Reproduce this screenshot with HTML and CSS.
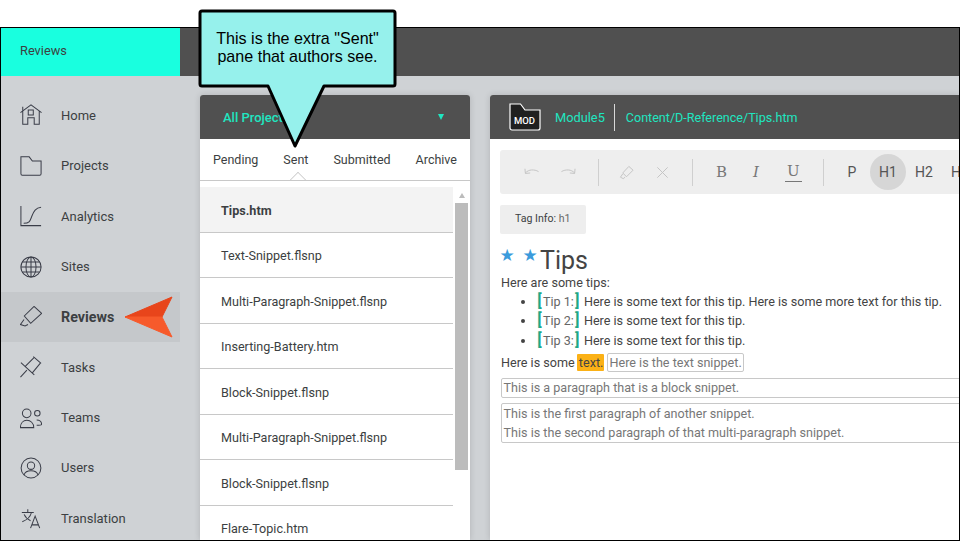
FILE: index.html
```html
<!doctype html>
<html lang="en">

<head>
    <meta charset="utf-8">
    <meta name="viewport" content="width=device-width, initial-scale=1">
    <title>Reviews</title>
    <link rel="stylesheet" href="styles.css">
</head>

<body>
<div class="frame">
    <header class="topbar">
        <div class="topbar-title">Reviews</div>
    </header>

    <div class="workspace">
        <nav class="sidenav">
            <a class="nav-item">
                <svg class="nav-icon" viewBox="0 0 24 24"><path d="M.5 9.500 12 1l11.500 8.500M3 3v4M3 7.500V22h5.500v-7h7v7H21V7.500M9 6.500h5.500V12H9z"/></svg>
                Home
            </a>
            <a class="nav-item">
                <svg class="nav-icon" viewBox="0 0 24 24"><path d="M1 2h9l3.500 4.500H23v14a1.500 1.500 0 0 1-1.500 1.500h-19A1.500 1.500 0 0 1 1 20.500z"/></svg>
                Projects
            </a>
            <a class="nav-item">
                <svg class="nav-icon" viewBox="0 0 24 24"><path d="M1 1v21.500h22M4 20c7 0 7-3 9-8s4-9 10-9.500"/></svg>
                Analytics
            </a>
            <a class="nav-item">
                <svg class="nav-icon" viewBox="0 0 24 24"><circle cx="12" cy="12" r="11"/><ellipse cx="12" cy="12" rx="5.500" ry="11"/><path d="M12 1v22M1 12h22M2.500 6.500h19M2.500 17.500h19"/></svg>
                Sites
            </a>
            <a class="nav-item nav-item-active">
                <svg class="nav-icon" viewBox="0 0 24 24"><path d="M15.300.5 23.600 8 11.700 18.900 4.700 10.900zM4.400 14.700.5 20.200l5 1.600 3.200-1.600"/></svg>
                Reviews
            </a>
            <a class="nav-item">
                <svg class="nav-icon" viewBox="0 0 24 24"><path d="M14.500.8 23 8M1 7.300 15.600 20.700M6 11l9-9M13 19l9-11M.5 23l7-7.500"/></svg>
                Tasks
            </a>
            <a class="nav-item">
                <svg class="nav-icon" viewBox="0 0 24 24"><circle cx="7.300" cy="6.900" r="4.700"/><path d="M.5 22.500c0-5 3-8 7-8s7.500 3 7.500 8z"/><circle cx="18.900" cy="6.900" r="3"/><path d="M18.200 14.200c3 0 5.400 2 5.400 4.700 0 1-1.500 1.100-5.400 1.100"/></svg>
                Teams
            </a>
            <a class="nav-item">
                <svg class="nav-icon" viewBox="0 0 24 24"><circle cx="12" cy="12" r="10.800"/><circle cx="12" cy="9.500" r="4"/><path d="M4.500 19.500c1-3.500 4-4.500 7.500-4.500s6.500 1 7.500 4.500"/></svg>
                Users
            </a>
            <a class="nav-item">
                <svg class="nav-icon" viewBox="0 0 24 24"><path d="M2 6h13M8.500 2.500V6M12.500 6c-1 4-4.500 8-10 10M4.500 8c1.500 3.500 4 5.500 7 7M11.500 23l5-13 5 13M13 19.500h7"/></svg>
                Translation
            </a>
        </nav>

        <section class="list-panel">
            <div class="panel-bar project-select">
                <span>All Projects</span>
                <span class="select-arrow"></span>
            </div>
            <div class="tabs">
                <span>Pending</span>
                <span class="tab-active">Sent</span>
                <span>Submitted</span>
                <span>Archive</span>
            </div>
            <div class="file-list">
                <ul class="files">
                    <li class="file-selected">Tips.htm</li>
                    <li>Text-Snippet.flsnp</li>
                    <li>Multi-Paragraph-Snippet.flsnp</li>
                    <li>Inserting-Battery.htm</li>
                    <li>Block-Snippet.flsnp</li>
                    <li>Multi-Paragraph-Snippet.flsnp</li>
                    <li>Block-Snippet.flsnp</li>
                    <li>Flare-Topic.htm</li>
                </ul>
                <div class="scrollbar">
                    <span class="scroll-up"></span>
                    <span class="scroll-thumb"></span>
                </div>
            </div>
        </section>

        <section class="editor-panel">
            <div class="panel-bar editor-bar">
                <svg class="mod-icon" viewBox="0 0 32 28"><path d="M1 1h10.500l4.500 6h15v18a2 2 0 0 1-2 2H3a2 2 0 0 1-2-2z"/></svg>
                <span class="mod-label">MOD</span>
                <span class="module-name">Module5</span>
                <span class="file-path">Content/D-Reference/Tips.htm</span>
            </div>

            <div class="toolbar">
                <div class="tool-group tool-group-off">
                    <svg class="tool-icon" viewBox="0 0 16 16"><path d="M1 4l.5 5 5-.5M1.500 8.500C5 4.500 11 4.500 15.500 7"/></svg>
                    <svg class="tool-icon" viewBox="0 0 16 16"><path d="M15 4l-.5 5-5-.5M14.500 8.500C11 4.500 5 4.500.5 7"/></svg>
                </div>
                <div class="tool-group tool-group-off">
                    <svg class="tool-icon" viewBox="0 0 16 16"><path d="m10.500 1.500 4.500 4-7 7L4 8.500zM4 9.500l-2.500 3.500 3 1.500 2-1.500"/></svg>
                    <svg class="tool-icon" viewBox="0 0 16 16"><path d="m2.500 2.500 11 11M13.500 2.500l-11 11"/></svg>
                </div>
                <div class="tool-group tool-group-format">
                    <span class="format-b">B</span>
                    <span class="format-i">I</span>
                    <span class="format-u">U</span>
                </div>
                <div class="tool-group tool-group-tags">
                    <span class="tag-btn">P</span>
                    <span class="tag-btn tag-btn-active">H1</span>
                    <span class="tag-btn">H2</span>
                    <span class="tag-btn">H3</span>
                </div>
            </div>

            <div class="tag-info">Tag Info: <span class="tag-name">h1</span></div>

            <article class="doc">
                <h1><span class="star">★</span><span class="star">★</span>Tips</h1>
                <p>Here are some tips:</p>
                <ul>
                    <li><span class="bracket">[</span><span class="tip-label">Tip 1:</span><span class="bracket">]</span> Here is some text for this tip. Here is some more text for this tip.</li>
                    <li><span class="bracket">[</span><span class="tip-label">Tip 2:</span><span class="bracket">]</span> Here is some text for this tip.</li>
                    <li><span class="bracket">[</span><span class="tip-label">Tip 3:</span><span class="bracket">]</span> Here is some text for this tip.</li>
                </ul>
                <p class="doc-inline">Here is some <mark>text.</mark> <span class="snippet-inline">Here is the text snippet.</span></p>
                <div class="snippet-block">This is a paragraph that is a block snippet.</div>
                <div class="snippet-block snippet-multi">
                    <p>This is the first paragraph of another snippet.</p>
                    <p>This is the second paragraph of that multi-paragraph snippet.</p>
                </div>
            </article>
        </section>
    </div>

    <svg class="arrow" viewBox="0 0 50 42">
        <path d="M1 21 48 1 38 21z" fill="#e8451b" stroke="#e8451b" stroke-linejoin="round"/>
        <path d="M1 21h37l10 20z" fill="#f75a2b" stroke="#f75a2b" stroke-linejoin="round"/>
    </svg>
</div>

<div class="callout">
    <svg class="callout-shape" viewBox="0 0 200 140">
        <path d="M4 2h191a2 2 0 0 1 2 2v71a2 2 0 0 1-2 2h-69l-29 60-27-60H4a2 2 0 0 1-2-2V4a2 2 0 0 1 2-2z"/>
    </svg>
    <p class="callout-text">This is the extra "Sent"<br>pane that authors see.</p>
</div>
</body>
</html>
```

FILE: styles.css
```css
:root {
    /* Colors */
    --color-teal: #19ffdf;
    --color-bar: #505050;
    --color-side: #cfd2d5;
    --color-text: #3c3f42;
    --color-line: #c8c8c8;
    --color-tool: #eeeeee;
    --color-green: #1fe6c0;

    --font-stack: Roboto, "Liberation Sans", sans-serif;
}

*, *::before, *::after {
    box-sizing: border-box;
}

html, body {
    height: 541px;
    overflow: hidden;
}

body {
    margin: 0;
    padding-top: 27px;
    background: #fff;
    font-family: var(--font-stack);
    font-size: 13px;
    color: var(--color-text);
}

.frame {
    position: relative;
    height: 514px;
    border: 1px solid #000;
    overflow: hidden;
    display: flex;
    flex-direction: column;
}

.topbar {
    flex: none;
    height: 48px;
    background: var(--color-bar);
}

.topbar-title {
    width: 179px;
    height: 100%;
    padding-left: 19px;
    line-height: 46px;
    font-size: 12.800px;
    background: var(--color-teal);
}

.workspace {
    flex: 1;
    display: flex;
    min-height: 0;
    background: var(--color-side);
}

/* Left navigation */
.sidenav {
    flex: none;
    width: 199px;
    padding-top: 14.300px;
}

.nav-item {
    width: 179px;
    height: 50.350px;
    display: flex;
    align-items: center;
    gap: 19px;
    padding-left: 19px;
}

.nav-item-active {
    font-weight: 700;
    font-size: 14.300px;
    background: #c5c8cb;
}

.nav-icon {
    flex: none;
    width: 22px;
    height: 22px;
    fill: none;
    stroke: #3a3d48;
    stroke-width: 1.100;
}

/* Middle panel */
.list-panel {
    flex: none;
    width: 270px;
    margin-top: 19px;
    background: #fff;
    border-radius: 3px 3px 0 0;
    box-shadow: 0 0 6px rgb(0 0 0 / 0.15);
    display: flex;
    flex-direction: column;
}

.panel-bar {
    flex: none;
    height: 44px;
    display: flex;
    align-items: center;
    background: var(--color-bar);
    border-radius: 3px 3px 0 0;
    color: var(--color-green);
}

.project-select {
    justify-content: space-between;
    padding: 0 26px 0 23px;
    font-weight: 500;
}

.select-arrow {
    width: 0;
    height: 0;
    border-left: 3.500px solid transparent;
    border-right: 3.500px solid transparent;
    border-top: 6px solid var(--color-green);
}

.tabs {
    flex: none;
    position: relative;
    height: 42px;
    display: flex;
    justify-content: space-between;
    align-items: center;
    padding: 0 13px 1px 13px;
    border-bottom: 1px solid var(--color-line);
    font-size: 12.500px;
}

.tab-active {
    position: relative;
}

.tab-active::after {
    content: "";
    position: absolute;
    left: 50%;
    bottom: -19.500px;
    width: 12px;
    height: 12px;
    margin-left: -3.500px;
    background: #fff;
    border-top: 1px solid var(--color-line);
    border-left: 1px solid var(--color-line);
    clip-path: polygon(0 0, 100% 0, 0 100%);
    transform: rotate(45deg);
}

.file-list {
    flex: 1;
    min-height: 0;
    margin-top: 6px;
    display: flex;
    overflow: hidden;
}

.files {
    flex: 1;
    margin: 0;
    padding: 0;
    list-style: none;
}

.files li {
    height: 45.500px;
    padding: 2px 0 0 21px;
    display: flex;
    align-items: center;
    font-size: 12.600px;
    border-bottom: 1px solid var(--color-line);
}

.file-selected {
    background: #f3f3f3;
    font-weight: 700;
}

.scrollbar {
    flex: none;
    width: 17px;
    padding: 0 2px;
    display: flex;
    flex-direction: column;
    align-items: center;
}

.scroll-up {
    flex: none;
    width: 0;
    height: 0;
    margin: 6px 0 5px;
    border-left: 3.500px solid transparent;
    border-right: 3.500px solid transparent;
    border-bottom: 5px solid #bcbcbc;
}

.scroll-thumb {
    width: 13px;
    height: 267px;
    background: #bcbcbc;
}

/* Editor panel */
.editor-panel {
    flex: 1;
    min-width: 0;
    margin: 19px 0 0 20px;
    background: #fff;
    border-radius: 3px 0 0 0;
    overflow: hidden;
    box-shadow: 0 0 6px rgb(0 0 0 / 0.15);
}

.editor-bar {
    position: relative;
    padding-left: 19px;
    border-radius: 0;
}

.mod-icon {
    flex: none;
    width: 32px;
    height: 28px;
    fill: #202020;
    stroke: #fff;
    stroke-width: 1.200;
}

.mod-label {
    position: absolute;
    left: 24px;
    top: 20px;
    font-size: 9.500px;
    font-weight: 500;
    color: #fff;
}

.module-name {
    margin-left: 14px;
    padding-right: 9px;
    height: 27px;
    line-height: 27px;
    font-size: 12.800px;
    border-right: 1px solid #d8d8d8;
}

.file-path {
    margin-left: 11px;
    font-size: 12.550px;
}

.toolbar {
    display: flex;
    align-items: center;
    width: 480px;
    height: 44px;
    margin: 11px 0 0 10px;
    background: var(--color-tool);
    border-radius: 3px;
}

.tool-group {
    display: flex;
    align-items: center;
    height: 27px;
}

.tool-group-off {
    gap: 22px;
    padding: 0 22px 0 24px;
    border-right: 1px solid #cfcfcf;
    width: 99px;
}

.tool-group-off + .tool-group-off {
    width: 94px;
    padding-left: 20px;
    gap: 21px;
}

.tool-icon {
    flex: none;
    width: 15px;
    height: 15px;
    fill: none;
    stroke: #c2c2c2;
    stroke-width: 1;
}

.tool-group-format {
    width: 131px;
    padding-left: 23px;
    gap: 26px;
    border-right: 1px solid #cfcfcf;
    font-family: "DejaVu Serif", serif;
    font-size: 15px;
    color: #777;
}

.format-i {
    font-style: italic;
}

.format-u {
    padding: 0 2px 1px;
    border-bottom: 1px solid #777;
    line-height: 17px;
}

.tool-group-tags {
    padding-left: 10px;
    gap: 0;
    font-size: 14px;
    color: #555;
}

.tag-btn {
    width: 36px;
    height: 36px;
    display: flex;
    align-items: center;
    justify-content: center;
    border-radius: 50%;
}

.tag-btn-active {
    background: #d6d6d6;
}

.tag-info {
    width: 86px;
    height: 29px;
    margin: 11px 0 0 10px;
    padding-left: 15px;
    line-height: 28px;
    font-size: 10.600px;
    background: var(--color-tool);
    border-radius: 2px;
}

.tag-name {
    color: #666;
}

/* Document content */
.doc {
    padding: 7px 0 0 11px;
    width: 490px;
    font-size: 12.600px;
    line-height: 19.500px;
    color: #444;
}

.doc h1 {
    margin: 0;
    height: 33px;
    font-size: 25px;
    font-weight: 400;
    line-height: 40px;
    display: flex;
}

.star {
    width: 23px;
    height: 28px;
    margin-left: -1.500px;
    font-family: "DejaVu Sans", sans-serif;
    font-size: 17px;
    line-height: 28px;
    color: #3b9bdc;
}

.star + .star {
    width: 17.500px;
    margin-left: 0;
}

.doc p {
    margin: 0;
}

.doc > p:first-of-type {
    line-height: 18.500px;
}

.doc ul {
    margin: -1px 0 0;
    padding-left: 35px;
}

.bracket {
    margin: 0 1.250px;
    font-weight: 700;
    font-size: 16px;
    line-height: 1;
    color: #1fa888;
}

.tip-label {
    color: #666;
}

.doc .doc-inline {
    margin-top: 3.250px;
}

.doc mark {
    margin-left: -1px;
    padding: 1px 1px 1px 2px;
    color: #444;
    background: #fbb116;
    border-radius: 1px;
}

.snippet-inline {
    padding: 1px;
    color: #777;
    border: 1px solid var(--color-line);
    border-radius: 2px;
}

.snippet-block {
    margin-top: 5px;
    padding-left: 1.500px;
    line-height: 18px;
    color: #777;
    border: 1px solid var(--color-line);
    border-radius: 2px;
}

.snippet-multi {
    line-height: 19px;
}

/* Overlays */
.arrow {
    position: absolute;
    left: 123px;
    top: 268px;
    width: 50px;
    height: 42px;
}

.callout {
    position: absolute;
    left: 198px;
    top: 9px;
    width: 200px;
    height: 140px;
}

.callout-shape {
    display: block;
    width: 200px;
    height: 140px;
    fill: #96f1ec;
    stroke: #000;
    stroke-width: 3;
    stroke-linejoin: round;
}

.callout-text {
    position: absolute;
    top: 19.500px;
    left: 0;
    width: 199px;
    margin: 0;
    text-align: center;
    font-family: "Liberation Sans", sans-serif;
    font-size: 16.100px;
    line-height: 18.500px;
    color: #000;
}
```
